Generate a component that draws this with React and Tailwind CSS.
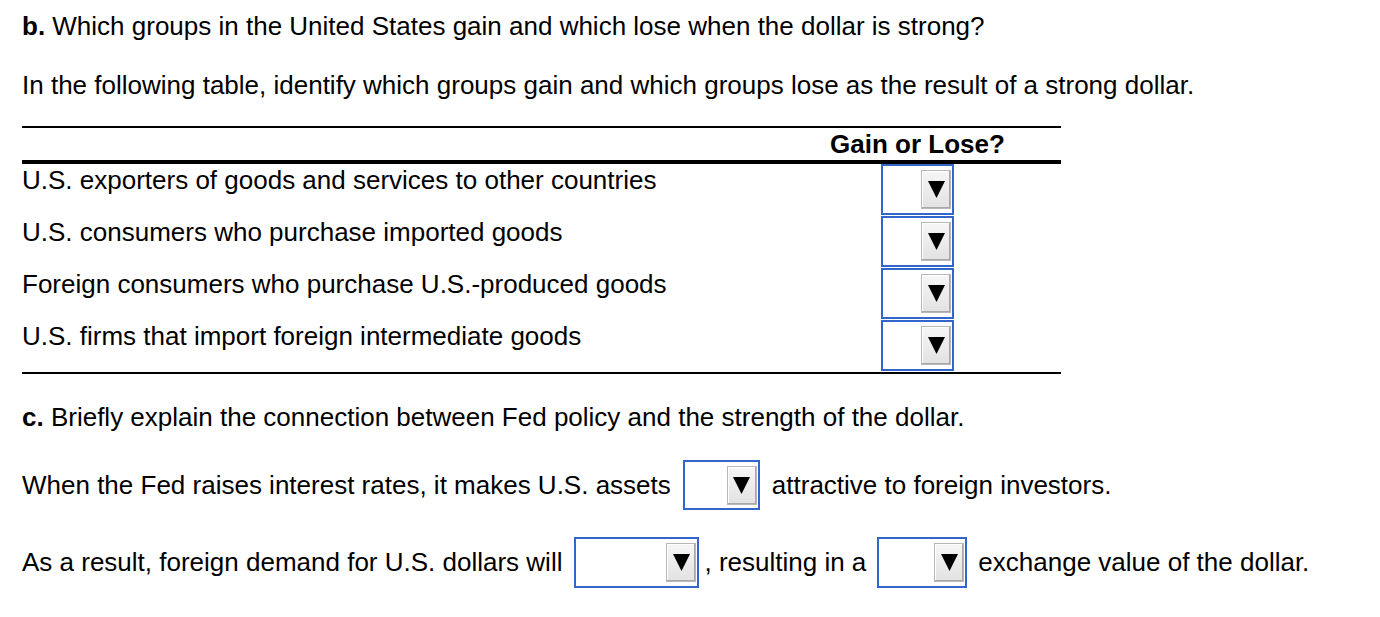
import React from "react";

const rows = [
  "U.S. exporters of goods and services to other countries",
  "U.S. consumers who purchase imported goods",
  "Foreign consumers who purchase U.S.-produced goods",
  "U.S. firms that import foreign intermediate goods",
];

function Dropdown({ className }) {
  return (
    <div
      className={`flex items-center justify-end border-2 border-[#3366cc] bg-white pr-[1px] ${className}`}
    >
      <div className="flex h-[39px] w-[30px] items-center justify-center border border-[#b8b8b8] bg-gradient-to-b from-[#f6f6f6] to-[#e2e2e2] shadow-[inset_-1px_-1px_0_#a8a8a8,inset_1px_1px_0_#ffffff]">
        <svg width="17" height="17" viewBox="0 0 17 17">
          <polygon points="0,0 17,0 8.5,17" fill="#000" />
        </svg>
      </div>
    </div>
  );
}

export default function App() {
  return (
    <div className="min-h-[617px] w-full bg-white pl-[22px] pt-[11px] font-['Liberation_Sans',Arial,sans-serif] text-[26px] text-black">
      {/* Part b */}
      <div className="flex h-[30px] items-center">
        <span className="font-bold">b.</span>&nbsp;Which groups in the United States gain and which lose when the dollar is strong?
      </div>
      <div className="mt-[29px] flex h-[30px] items-center">
        In the following table, identify which groups gain and which groups lose as the result of a strong dollar.
      </div>

      {/* Table */}
      <div className="mt-[26px] w-[1039px] border-t-2 border-b-2 border-black">
        <div className="grid grid-cols-[1fr_287px] border-b-4 border-black">
          <div />
          <div className="flex h-[32px] items-center justify-center font-bold">Gain or Lose?</div>
        </div>
        {rows.map((r) => (
          <div key={r} className="grid h-[52px] grid-cols-[1fr_287px]">
            <div className="flex h-[30px] items-start pt-[1px] leading-[30px]">{r}</div>
            <div className="flex justify-center">
              <Dropdown className="h-[51px] w-[73px]" />
            </div>
          </div>
        ))}
      </div>

      {/* Part c */}
      <div className="mt-[28px] flex h-[30px] items-center">
        <span className="font-bold">c.</span>&nbsp;Briefly explain the connection between Fed policy and the strength of the dollar.
      </div>
      <div className="mt-[28px] flex h-[50px] items-center">
        <span>When the Fed raises interest rates, it makes U.S. assets</span>
        <Dropdown className="ml-[12px] mr-[12px] h-[50px] w-[77px]" />
        <span>attractive to foreign investors.</span>
      </div>
      <div className="mt-[27px] flex h-[51px] items-center">
        <span>As a result, foreign demand for U.S. dollars will</span>
        <Dropdown className="ml-[12px] mr-[5px] h-[51px] w-[125px]" />
        <span>, resulting in a</span>
        <Dropdown className="ml-[11px] mr-[11px] h-[51px] w-[90px]" />
        <span>exchange value of the dollar.</span>
      </div>
    </div>
  );
}
